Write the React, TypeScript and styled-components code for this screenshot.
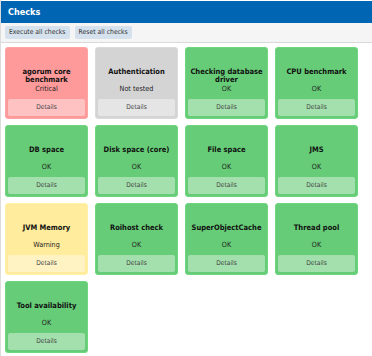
import styled, { createGlobalStyle } from "styled-components";

type Status = "ok" | "critical" | "untested" | "warning";

type Check = {
  title: string;
  status: Status;
};

const checks: Check[] = [
  { title: "agorum core benchmark", status: "critical" },
  { title: "Authentication", status: "untested" },
  { title: "Checking database driver", status: "ok" },
  { title: "CPU benchmark", status: "ok" },
  { title: "DB space", status: "ok" },
  { title: "Disk space (core)", status: "ok" },
  { title: "File space", status: "ok" },
  { title: "JMS", status: "ok" },
  { title: "JVM Memory", status: "warning" },
  { title: "Roihost check", status: "ok" },
  { title: "SuperObjectCache", status: "ok" },
  { title: "Thread pool", status: "ok" },
  { title: "Tool availability", status: "ok" },
];

const statusLabel: Record<Status, string> = {
  ok: "OK",
  critical: "Critical",
  untested: "Not tested",
  warning: "Warning",
};

const statusColor: Record<Status, { bg: string; border: string }> = {
  ok: { bg: "#66cc77", border: "#6dd67e" },
  critical: { bg: "#ff9a9a", border: "#ffa3a3" },
  untested: { bg: "#d4d4d4", border: "#dadada" },
  warning: { bg: "#ffec9c", border: "#fff0a8" },
};

const GlobalStyle = createGlobalStyle`
  html, body {
    margin: 0;
    padding: 0;
    background: #ffffff;
  }
  body {
    font-family: "DejaVu Sans Condensed", "DejaVu Sans", sans-serif;
    color: #1a1a1a;
  }
`;

export default function App() {
  return (
    <>
      <GlobalStyle />
      <Panel>
        <Header>Checks</Header>
        <Toolbar>
          <ToolButton>Execute all checks</ToolButton>
          <ToolButton>Reset all checks</ToolButton>
        </Toolbar>
        <Grid>
          {checks.map((check) => (
            <Card key={check.title} $status={check.status}>
              <Info>
                <Title>{check.title}</Title>
                <StatusText>{statusLabel[check.status]}</StatusText>
              </Info>
              <DetailsButton>Details</DetailsButton>
            </Card>
          ))}
        </Grid>
      </Panel>
    </>
  );
}

const Panel = styled.div`
  width: 372px;
  height: 356px;
  box-sizing: border-box;
  border-left: 1px solid #dcdcdc;
  display: flex;
  flex-direction: column;
`;

const Header = styled.div`
  height: 22px;
  margin-top: 1px;
  background: #0066b3;
  color: #ffffff;
  font-weight: bold;
  font-size: 9px;
  line-height: 22px;
  padding-left: 7px;
`;

const Toolbar = styled.div`
  height: 20px;
  box-sizing: border-box;
  background: #f5f5f5;
  border-bottom: 1px solid #d9d9d9;
  display: flex;
  align-items: center;
  gap: 5px;
  padding-left: 4px;
`;

const ToolButton = styled.button`
  height: 13px;
  padding: 0 4px;
  border: none;
  border-radius: 2px;
  background: #d5e1ec;
  color: #333333;
  font-family: inherit;
  font-size: 6.8px;
  line-height: 13px;
`;

const Grid = styled.div`
  display: grid;
  grid-template-columns: repeat(4, 83px);
  grid-auto-rows: 72px;
  column-gap: 7px;
  row-gap: 6px;
  padding: 4px 0 0 4px;
`;

const Card = styled.div<{ $status: Status }>`
  background: ${({ $status }) => statusColor[$status].bg};
  border: 1px solid ${({ $status }) => statusColor[$status].border};
  border-radius: 3px;
  box-sizing: border-box;
  display: flex;
  flex-direction: column;
  padding: 0 2px 2px;
`;

const Info = styled.div`
  flex: 1;
  display: flex;
  flex-direction: column;
  align-items: center;
  padding-top: 20px;
`;

const Title = styled.div`
  height: 16px;
  font-weight: bold;
  font-size: 7.5px;
  line-height: 8px;
  text-align: center;
  color: #111111;
`;

const StatusText = styled.div`
  font-size: 7.2px;
  line-height: 9px;
  color: #222222;
`;

const DetailsButton = styled.div`
  height: 17px;
  border-radius: 2px;
  background: rgba(255, 255, 255, 0.4);
  color: #444444;
  font-size: 6.6px;
  line-height: 17px;
  text-align: center;
`;
